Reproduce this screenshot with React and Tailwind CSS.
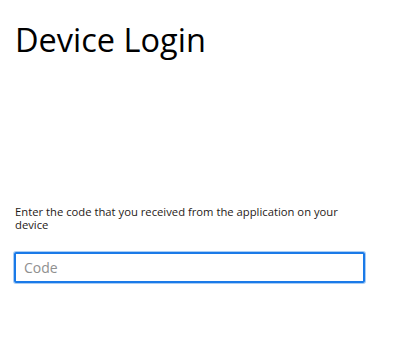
export default function App() {
    return (
        <div className="min-h-screen bg-white px-[15px] font-['Open_Sans',sans-serif] text-black">
            <h1 className="pt-[18px] text-[32.5px] leading-[44px] font-normal">Device Login</h1>
            <div className="mt-[143px] w-[351px]">
                <p className="text-[11.25px] leading-[13px] text-[#1f1a17]">
                    Enter the code that you received from the application on your device
                </p>
                <input
                    type="text"
                    autoFocus
                    placeholder="Code"
                    className="mt-[21px] h-[31px] w-[351px] -ml-px rounded-[2px] border-2 border-[#1a7ae8] px-[8px] text-[14px] text-black placeholder-[#8f8f8f] shadow-[0_0_0_1px_#a9cdf5] outline-none"
                />
            </div>
        </div>
    );
}
